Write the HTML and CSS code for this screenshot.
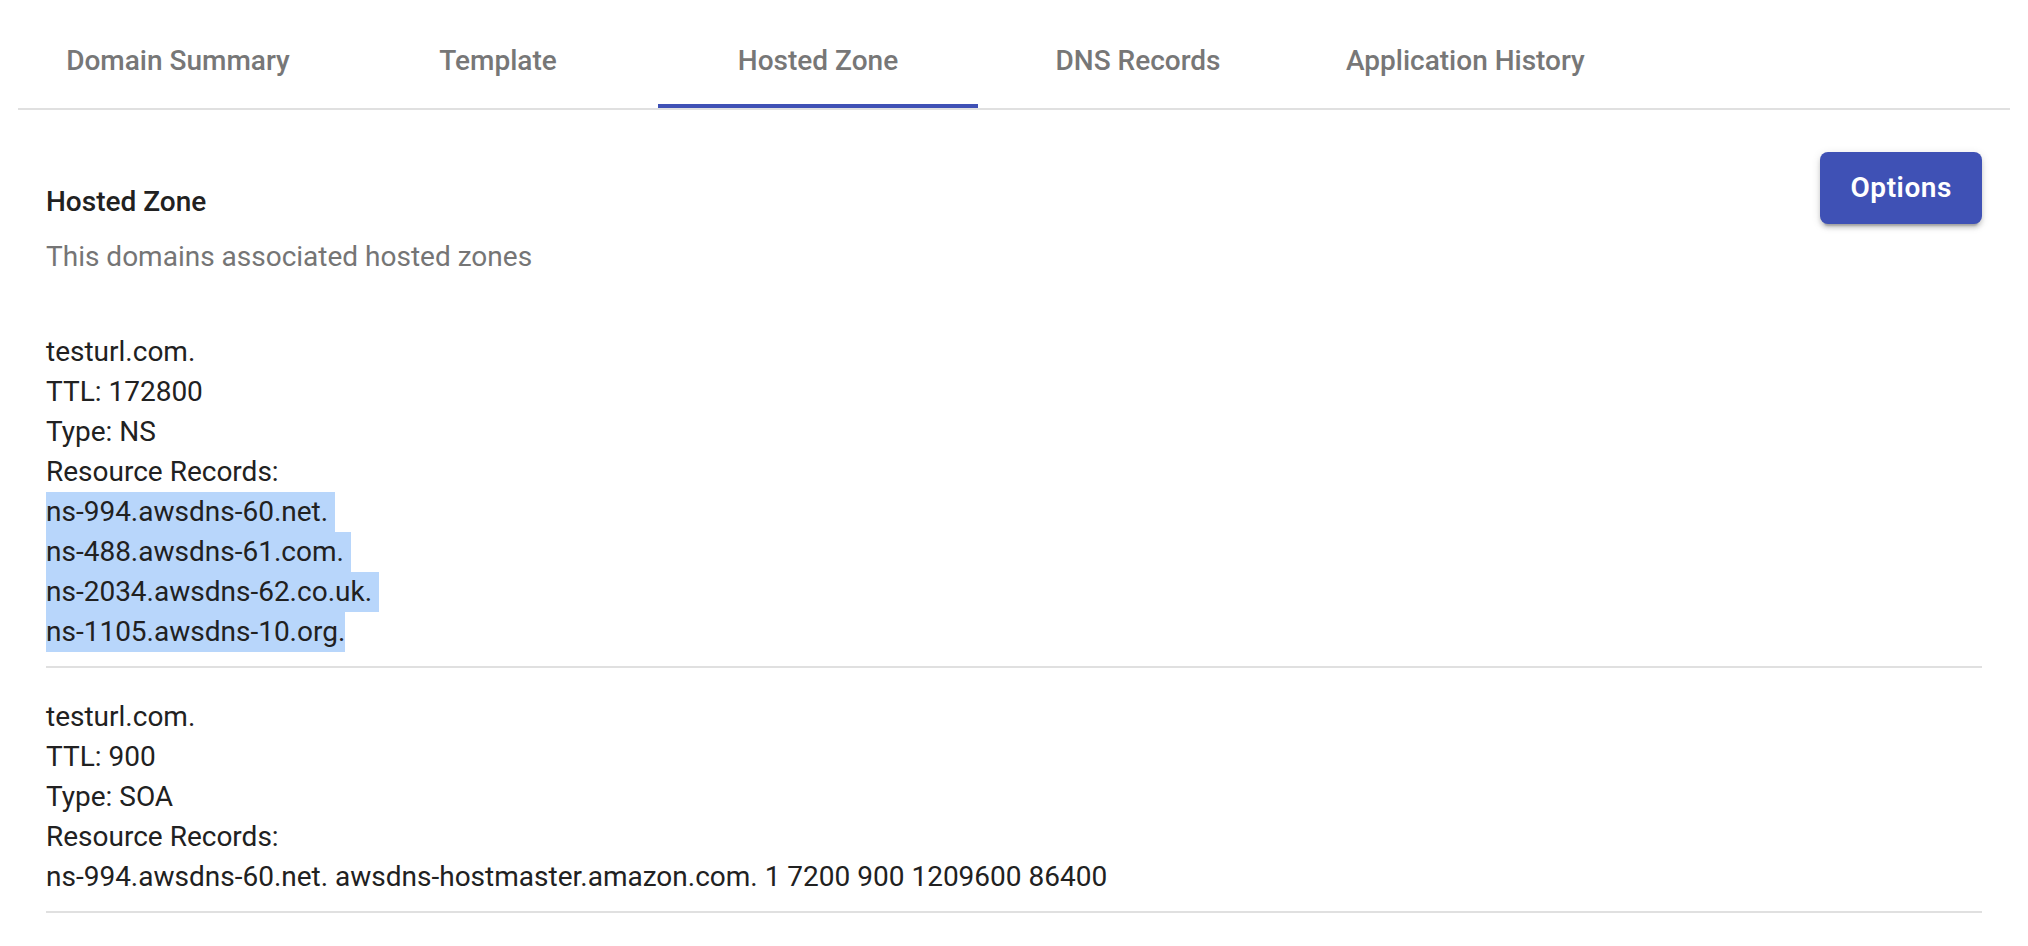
FILE: index.html
```html
<!DOCTYPE html>
<html lang="en">
<head>
<meta charset="utf-8">
<title>Hosted Zone</title>
<link rel="stylesheet" href="styles.css">
</head>
<body>
<div class="page">
  <nav class="tabs">
    <div class="tab">Domain Summary</div>
    <div class="tab">Template</div>
    <div class="tab tab-active">Hosted Zone</div>
    <div class="tab">DNS Records</div>
    <div class="tab">Application History</div>
  </nav>
  <section class="content">
    <header class="card-header">
      <div class="card-heading">
        <div class="card-title">Hosted Zone</div>
        <div class="card-subtitle">This domains associated hosted zones</div>
      </div>
      <button class="btn-primary" type="button">Options</button>
    </header>
    <div class="records">
      <div class="record">
        <div class="line">testurl.com.</div>
        <div class="line">TTL: 172800</div>
        <div class="line">Type: NS</div>
        <div class="line">Resource Records:</div>
        <div class="line"><span class="sel sel-nl">ns-994.awsdns-60.net.</span></div>
        <div class="line"><span class="sel sel-nl">ns-488.awsdns-61.com.</span></div>
        <div class="line"><span class="sel sel-nl">ns-2034.awsdns-62.co.uk.</span></div>
        <div class="line"><span class="sel">ns-1105.awsdns-10.org.</span></div>
      </div>
      <div class="record">
        <div class="line">testurl.com.</div>
        <div class="line">TTL: 900</div>
        <div class="line">Type: SOA</div>
        <div class="line">Resource Records:</div>
        <div class="line">ns-994.awsdns-60.net. awsdns-hostmaster.amazon.com. 1 7200 900 1209600 86400</div>
      </div>
    </div>
  </section>
</div>
</body>
</html>
```

FILE: styles.css
```css
html, body {
  margin: 0;
  padding: 0;
  background: #ffffff;
}

body {
  font-family: Roboto, "Helvetica Neue", Arial, sans-serif;
  color: rgba(0, 0, 0, 0.87);
}

.page {
  padding: 0 18px;
}

.tabs {
  display: flex;
  padding-top: 12px;
  border-bottom: 2px solid #e0e0e0;
}

.tab {
  min-width: 320px;
  box-sizing: border-box;
  height: 96px;
  padding: 0 48px;
  display: flex;
  align-items: center;
  justify-content: center;
  font-size: 28px;
  font-weight: 500;
  line-height: 1.75;
  color: #777777;
  white-space: nowrap;
}

.tab-active {
  box-shadow: inset 0 -4px 0 #3f51b5;
}

.content {
  padding: 0 28px;
}

.card-header {
  display: flex;
  justify-content: space-between;
  align-items: flex-start;
  padding-top: 42px;
  margin-bottom: 26px;
}

.card-heading {
  padding-top: 30px;
}

.card-title {
  font-size: 28px;
  font-weight: 500;
  line-height: 40px;
  color: #212121;
}

.card-subtitle {
  margin-top: 15px;
  font-size: 28px;
  line-height: 40px;
  color: #757575;
}

.btn-primary {
  font-family: inherit;
  font-size: 28px;
  font-weight: 600;
  line-height: 48px;
  letter-spacing: 0.02em;
  color: #ffffff;
  background: #3f51b5;
  border: none;
  border-radius: 8px;
  padding: 12px 30px;
  box-shadow: 0 6px 2px -4px rgba(0, 0, 0, 0.2), 0 4px 4px 0 rgba(0, 0, 0, 0.14), 0 2px 10px 0 rgba(0, 0, 0, 0.12);
  cursor: pointer;
}

.record {
  padding: 29px 0 14px;
  border-bottom: 2px solid #e0e0e0;
}

.line {
  font-size: 28px;
  line-height: 40px;
  color: #212121;
  white-space: nowrap;
}

.sel {
  display: inline-block;
  background: #b8d6fb;
  line-height: 40px;
}

.sel-nl {
  padding-right: 7px;
}
```
